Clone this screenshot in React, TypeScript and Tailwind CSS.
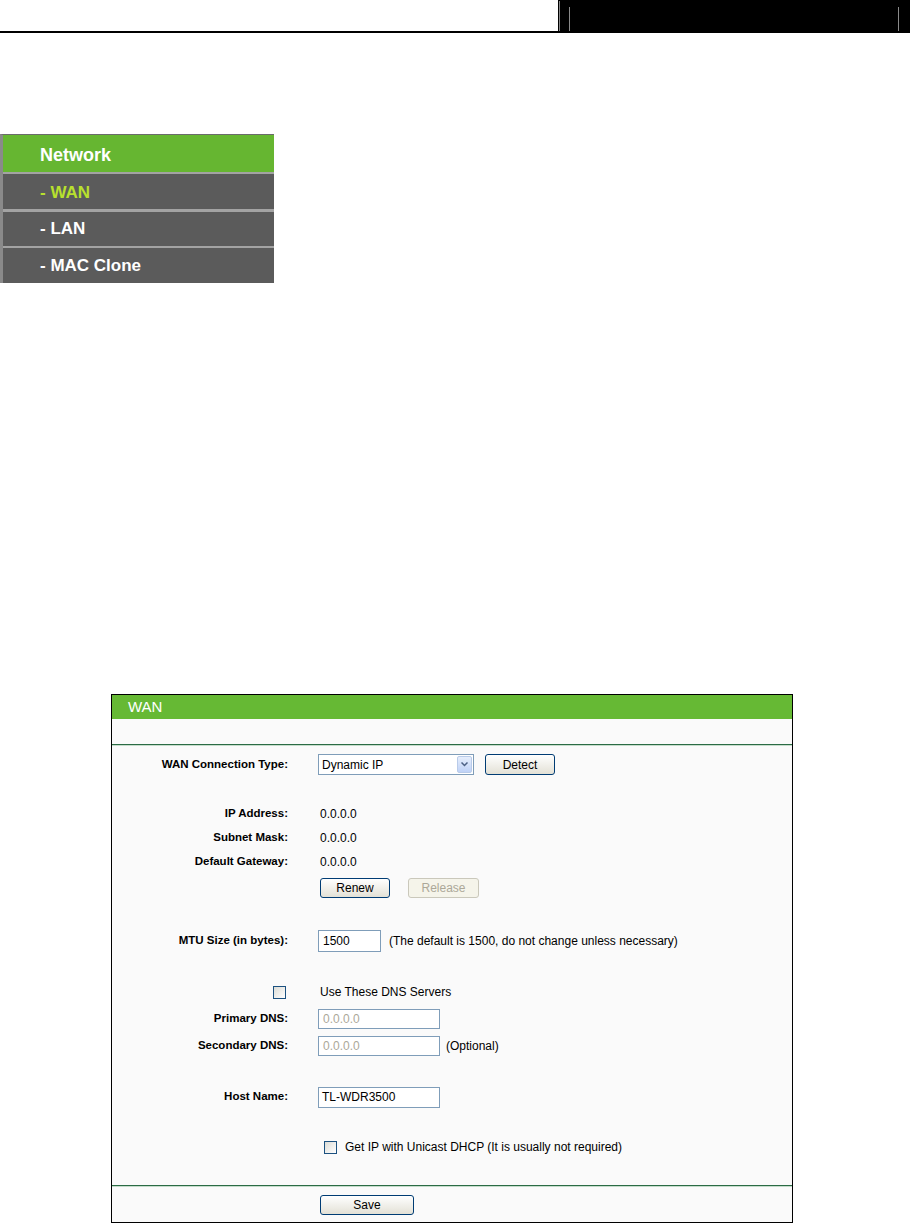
import React from "react";

const font = { fontFamily: '"Liberation Sans", Arial, sans-serif' };

function Btn({ children, w, h, disabled }: { children: React.ReactNode; w: string; h: string; disabled?: boolean }) {
  return (
    <div
      className={`${w} ${h} flex items-center justify-center rounded-[3px] border text-[12px] ${
        disabled
          ? "border-[#cac8bb] bg-[#f5f4ea] text-[#aca899]"
          : "border-[#003c74] bg-gradient-to-b from-white to-[#e3e1d6] text-black"
      }`}
    >
      {children}
    </div>
  );
}

function Label({ children }: { children: React.ReactNode }) {
  return <div className="w-[176px] shrink-0 text-right text-[11.5px] font-bold text-black">{children}</div>;
}

function Checkbox() {
  return <div className="h-[13px] w-[13px] border border-[#1c5180] bg-gradient-to-br from-[#dcdcd6] to-white" />;
}

export default function App() {
  return (
    <div className="relative min-h-[1223px] w-[910px] bg-white" style={font}>
      {/* header */}
      <div className="flex h-[33px] w-full">
        <div className="flex-1 border-b-[2px] border-black" />
        <div className="flex w-[352px] bg-black">
          <div className="ml-[1px] mt-[1px] h-[30px] w-[1px] bg-[#8a8a8a]" />
          <div className="ml-[9px] mt-[7px] h-[24px] w-[1px] bg-[#8a8a8a]" />
          <div className="flex-1" />
          <div className="mr-[11px] mt-[7px] h-[24px] w-[1px] bg-[#8a8a8a]" />
        </div>
      </div>

      {/* sidebar */}
      <div className="mt-[101px] w-[274px] border-l-[3px] border-t border-l-[#8a8a8a] border-t-[#6b6b6b] bg-[#a3a3a3]">
        <div className="flex h-[37px] items-center bg-[#66b631] pl-[37px] pt-[4px] text-[18px] font-bold text-white">Network</div>
        <div className="mt-[2px] flex h-[35px] items-center bg-[#5b5b5b] pl-[37px] pt-[2px] text-[17px] font-bold text-[#b8e02e]">- WAN</div>
        <div className="mt-[3px] flex h-[34px] items-center bg-[#5b5b5b] pl-[37px] text-[17px] font-bold text-white">- LAN</div>
        <div className="mt-[2px] flex h-[35px] items-center bg-[#5b5b5b] pl-[37px] text-[17px] font-bold text-white">- MAC Clone</div>
      </div>

      {/* WAN panel */}
      <div className="ml-[111px] mt-[411px] w-[682px] border border-black bg-[#fafafa]">
        <div className="flex h-[24px] items-center bg-[#66b934] pl-[16px] text-[15px] text-white">WAN</div>
        <div className="h-[25px]" />
        <div className="h-[1px] bg-[#2b6b45]" />
        <div className="h-[1px] bg-[#c5dccb]" />

        <div className="flex h-[23px] items-center mt-[7px]">
          <Label>WAN Connection Type:</Label>
          <div className="ml-[30px] flex h-[21px] w-[156px] items-center border border-[#7f9db9] bg-white pl-[3px] text-[12px]">
            <span className="flex-1">Dynamic IP</span>
            <div className="mr-[1px] flex h-[17px] w-[15px] items-center justify-center rounded-[2px] border border-[#b9cbe9] bg-gradient-to-b from-[#e6eefc] to-[#bfd2f7]">
              <svg width="7" height="5" viewBox="0 0 7 5">
                <path d="M0.5 0.5 L3.5 3.5 L6.5 0.5" stroke="#4d6185" strokeWidth="1.5" fill="none" />
              </svg>
            </div>
          </div>
          <div className="ml-[11px]">
            <Btn w="w-[70px]" h="h-[21px]">Detect</Btn>
          </div>
        </div>

        <div className="mt-[26px] flex h-[24px] items-center">
          <Label>IP Address:</Label>
          <div className="ml-[32px] text-[12px]">0.0.0.0</div>
        </div>
        <div className="flex h-[24px] items-center">
          <Label>Subnet Mask:</Label>
          <div className="ml-[32px] text-[12px]">0.0.0.0</div>
        </div>
        <div className="flex h-[24px] items-center">
          <Label>Default Gateway:</Label>
          <div className="ml-[32px] text-[12px]">0.0.0.0</div>
        </div>
        <div className="mt-[4px] flex items-center pl-[208px]">
          <Btn w="w-[70px]" h="h-[20px]">Renew</Btn>
          <div className="ml-[18px]">
            <Btn w="w-[71px]" h="h-[20px]" disabled>Release</Btn>
          </div>
        </div>

        <div className="mt-[31px] flex h-[23px] items-center">
          <Label>MTU Size (in bytes):</Label>
          <div className="ml-[30px] flex h-[22px] w-[63px] items-center border border-[#7f9db9] bg-white pl-[4px] text-[12px]">1500</div>
          <div className="ml-[8px] text-[12px]">(The default is 1500, do not change unless necessary)</div>
        </div>

        <div className="mt-[32px] flex h-[16px] items-center">
          <div className="flex w-[174px] shrink-0 justify-end">
            <Checkbox />
          </div>
          <div className="ml-[34px] text-[12px]">Use These DNS Servers</div>
        </div>
        <div className="mt-[8px] flex h-[22px] items-center">
          <Label>Primary DNS:</Label>
          <div className="ml-[30px] flex h-[20px] w-[122px] items-center border border-[#7f9db9] bg-white pl-[4px] text-[12px] text-[#aca899]">0.0.0.0</div>
        </div>
        <div className="mt-[5px] flex h-[22px] items-center">
          <Label>Secondary DNS:</Label>
          <div className="ml-[30px] flex h-[20px] w-[122px] items-center border border-[#7f9db9] bg-white pl-[4px] text-[12px] text-[#aca899]">0.0.0.0</div>
          <div className="ml-[6px] text-[12px]">(Optional)</div>
        </div>

        <div className="mt-[29px] flex h-[22px] items-center">
          <Label>Host Name:</Label>
          <div className="ml-[30px] flex h-[21px] w-[122px] items-center border border-[#7f9db9] bg-white pl-[3px] text-[12px]">TL-WDR3500</div>
        </div>

        <div className="mt-[31px] flex h-[16px] items-center pl-[212px]">
          <Checkbox />
          <div className="ml-[8px] text-[12px]">Get IP with Unicast DHCP (It is usually not required)</div>
        </div>

        <div className="mt-[30px] h-[1px] bg-[#2b6b45]" />
        <div className="h-[1px] bg-[#c5dccb]" />
        <div className="flex h-[35px] items-center pl-[208px]">
          <Btn w="w-[94px]" h="h-[20px]">Save</Btn>
        </div>
      </div>
    </div>
  );
}
